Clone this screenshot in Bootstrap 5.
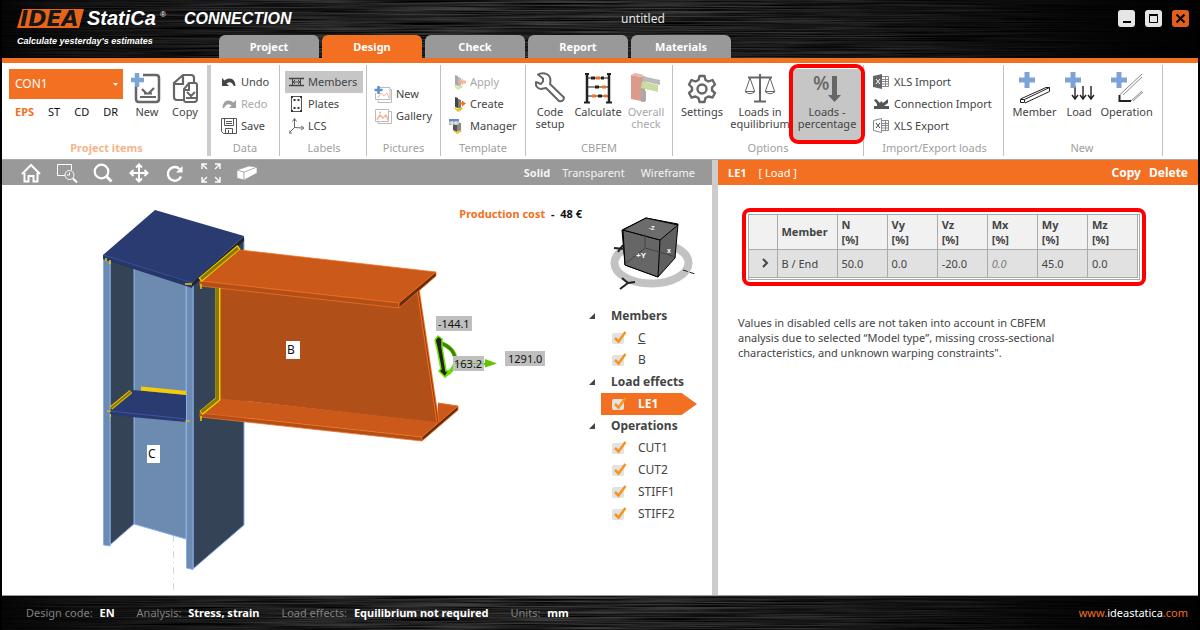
<!DOCTYPE html>
<html lang="en">
<head>
<meta charset="utf-8">
<meta name="viewport" content="width=device-width, initial-scale=1">
<title>IDEA StatiCa Connection - untitled</title>
<link href="https://cdn.jsdelivr.net/npm/bootstrap@5.3.0/dist/css/bootstrap.min.css" rel="stylesheet">
<style>
:root{--brand:#f36f21;--ink:#444;--muted:#a0a0a0;--line:#c0c0c0}
body{font:11px/16px "Noto Sans","Open Sans",sans-serif;color:var(--ink);border:solid #000;border-width:0 2px;background:#fff}
button{font:inherit;color:inherit;background:none;border:0;padding:0}
a{color:inherit;text-decoration:none}
svg{display:block;flex:none}
.brushed{background:
 url("data:image/svg+xml,%3Csvg xmlns='http://www.w3.org/2000/svg' width='1200' height='64'%3E%3Cfilter id='f' x='0' y='0' width='1' height='1'%3E%3CfeTurbulence type='fractalNoise' baseFrequency='.008 .8' numOctaves='3' seed='4'/%3E%3CfeColorMatrix values='0 0 0 0 0 0 0 0 0 0 0 0 0 0 0 1.800 0 0 0 -.450'/%3E%3C/filter%3E%3Crect width='1200' height='64' filter='url(%23f)'/%3E%3C/svg%3E"),
 linear-gradient(90deg,#0a0a0a 0,#262626 12%,#3c3c3c 28%,#404040 50%,#2a2a2a 72%,#080808 92%,#020202 100%)}
.top-bar{height:63px;border-bottom:5px solid var(--brand)}
.logo-col{width:217px;padding:8px 0 0 14px}
.tagline{font:italic bold 9px/12px "Liberation Sans",sans-serif;padding:5px 0 0 1px}
.doc-title{font-size:12px;line-height:20px;color:#e4e4e4;margin-left:402px;padding-top:9px}
.main-tabs{gap:3px}
.main-tabs button{width:100px;height:23px;border-radius:6px 6px 0 0;background:#999;color:#fff;font-weight:700}
.main-tabs .current{background:var(--brand)}
.win-btns{gap:10px;padding:10px 9px 0 0}
.win-btns button{width:17px;height:17px;border-radius:3px;background:#e6e6e6}
.win-btns .close-win{background:#e2601a}
.ribbon{height:97px;padding:2px 0 3px;border-bottom:1px solid #aaa}
.rgroup{border-right:1px solid var(--line);padding:4px 3px 0;flex:none;display:flex;flex-direction:column}
.rgroup>.tools{flex:1}
.rgroup>.stack{padding-top:2px}
.rgroup>.caption{text-align:center;color:var(--muted)}
.g-items{width:209px;border-right:4px solid #ccc;padding-left:7px}
.g-items>.caption{color:#f8b489;font-weight:700}
.g-data{width:69px}.g-labels{width:87px;padding-left:5px}.g-pict{width:74px}.g-tmpl{width:85px}
.g-cbfem{width:147px;padding:4px 0 0}.g-opt{width:191px;padding:4px 0 0}.g-io{width:140px;padding-left:5px}.g-new{width:159px;padding-left:1px}
.sm-btn{display:flex;align-items:center;gap:4px;height:22px;padding-left:7px;width:100%;white-space:nowrap}
.sm-btn.pressed{background:#c6c6c6}
.g-labels .sm-btn,.g-io .sm-btn,.g-tmpl .sm-btn{padding-left:4px}
.g-pict .sm-btn{padding-left:4px}
.lg-btn{display:flex;flex-direction:column;align-items:center;padding-top:3px;line-height:12px;gap:2px;width:48px;height:71px;white-space:nowrap}
.g-opt .lg-btn{width:58px}
.g-opt .lg-btn.pressed{width:68px;background:#c6c6c6}
.g-items .lg-btn{width:38px}
.g-new .w-a{width:62px}.g-new .w-b{width:30px}.g-new .w-c{width:68px}
.off{color:#a8a8a8}.off svg{opacity:.5}
.con-select{width:114px;height:30px;border:0;border-radius:0;color:#fff;padding:0 6px;font-size:12px;appearance:none;background:var(--brand) url("data:image/svg+xml,%3Csvg xmlns='http://www.w3.org/2000/svg' width='5' height='3'%3E%3Cpath d='M0 0h5L2.500 3z' fill='%23fff'/%3E%3C/svg%3E") no-repeat right 5px center}
.types{gap:14px;padding:5px 0 0 6px;color:#111}
.types .on{color:var(--brand);font-weight:700}
.ring{position:relative}
.ring::after{content:"";position:absolute;inset:-5px -4px -4px -4px;border:4px solid red;border-radius:9px;pointer-events:none}
.left-pane{width:716px;border-right:6px solid #ccc}
.view-bar{height:25px;background:#999;color:#f4f4f4;padding:0 17px 0 11px}
.view-bar .icons button{width:36px}
.view-bar .icons svg{margin:auto}
.cost{top:21px;right:0;color:#111;font-weight:700}
.side{width:130px}
.tree-list{margin:0;padding:0 0 0 7px;list-style:none}
.tree-list li{height:22px;display:flex;align-items:center;font-size:12px}
.tree-list .head{font-weight:700}
.tree-list .head svg{margin-right:16px}
.tree-list .leaf{padding-left:23px;gap:11px}
.tree-list .sel{margin-left:12px;padding-left:11px;width:96px;background:var(--brand);color:#fff;font-weight:700;clip-path:polygon(0 0,84% 0,100% 50%,84% 100%,0 100%)}
.tick{appearance:none;width:15px;height:15px;margin:0;background:url("data:image/svg+xml,%3Csvg xmlns='http://www.w3.org/2000/svg' width='15' height='15'%3E%3Crect y='2' width='12' height='11' rx='2' fill='%23e2e2e2'/%3E%3Cpath d='M3 7l3.500 3.500L13.500 1' fill='none' stroke='%23f7941e' stroke-width='2.500'/%3E%3C/svg%3E")}
.prop-bar{height:25px;background:var(--brand);color:#fff;padding:0 10px}
.prop-bar button{font-size:12px}
.table-ring{border:4px solid red;border-radius:8px;padding:2px;margin:23px 0 0 24px;width:404px}
.table-box{border:1px solid #aaa;padding-bottom:1px}
.pct{width:389px;border-collapse:collapse;table-layout:fixed}
.pct th,.pct td{border:solid #aaa;border-width:0 1px 1px 0;padding:0 0 0 4px;line-height:15px}
.pct th{height:34px;background:#f1f1f1}
.pct td{height:28px;background:#e1e1e1}
.pct .c0{width:28px}.pct .c1{width:60px}
.note{width:340px;margin:29px 0 0 20px;line-height:15px}
.status{height:35px;color:#808080;border-top:1px solid #999;padding:0 10px 0 24px;gap:22px}
.status b{color:#fff;margin-left:4px}
.site{color:var(--brand)}
.site span{color:#fff}
</style>
</head>
<body class="min-vh-100 d-flex flex-column">
<header class="top-bar brushed d-flex">
  <div class="logo-col text-white">
    <svg width="280" height="22" viewBox="16 8 280 22" overflow="visible">
      <path d="M22.500 9H84l-5 19H17z" fill="#e8641b"/>
      <text x="20" y="26" font-family="DejaVu Sans" font-weight="bold" font-style="italic" font-size="22" fill="#171717">IDEA</text>
      <text x="87" y="25" font-family="Liberation Sans" font-weight="bold" font-style="italic" font-size="20" fill="#fff">StatiCa</text>
      <text x="160" y="17" font-family="Liberation Sans" font-style="italic" font-size="8" fill="#fff">®</text>
      <text x="184" y="24" font-family="Liberation Sans" font-weight="bold" font-style="italic" font-size="16" fill="#fff">CONNECTION</text>
    </svg>
    <div class="tagline text-nowrap">Calculate yesterday's estimates</div>
  </div>
  <div class="flex-fill d-flex flex-column justify-content-between">
    <div class="doc-title">untitled</div>
    <nav class="main-tabs d-flex">
      <button>Project</button><button class="current">Design</button><button>Check</button><button>Report</button><button>Materials</button>
    </nav>
  </div>
  <div class="win-btns d-flex">
    <button aria-label="Minimize"><svg width="17" height="17"><path d="M5 12h8" stroke="#000" stroke-width="2"/></svg></button>
    <button aria-label="Maximize"><svg width="17" height="17"><path d="M4.500 5.500h8v7h-8zM4 4.500h9" fill="none" stroke="#000"/></svg></button>
    <button class="close-win" aria-label="Close"><svg width="17" height="17"><path d="M4.500 4.500l8 8m0-8l-8 8" stroke="#000" stroke-width="2"/></svg></button>
  </div>
</header>

<section class="ribbon d-flex">
  <div class="rgroup g-items">
    <div class="tools d-flex">
      <div class="flex-fill">
        <select class="con-select" aria-label="Project item"><option>CON1</option></select>
        <div class="types d-flex"><button class="on">EPS</button><button>ST</button><button>CD</button><button>DR</button></div>
      </div>
      <button class="lg-btn">
        <svg width="32" height="32" fill="none" stroke="#666" stroke-width="2.500"><path d="M12 3h13q3 0 3 3v21q0 3-3 3H8q-3 0-3-3V14"/><path d="M9 25h16M11 17l5 5m7-6l-5 5M13 21.500h8" stroke-width="2.200"/><path d="M6 1v14M-1 8h14" stroke="#7da3d6" stroke-width="4.500"/></svg>
        New</button>
      <button class="lg-btn">
        <svg width="32" height="32" fill="none" stroke="#666" stroke-width="2.200"><path d="M14 28H8q-3 0-3-3V11l9-8h8q3 0 3 3v5M14 4v8H6"/><path d="M20 11h6q2 0 2 2v14q0 3-3 3h-8q-2 0-2-2V17zM20 12v6h-4M17 26h10M18 20l4 4 4-4" stroke-width="2"/></svg>
        Copy</button>
    </div>
    <div class="caption">Project items</div>
  </div>
  <div class="rgroup g-data">
    <div class="tools stack">
      <button class="sm-btn"><svg width="16" height="16"><path d="M1 4v8h7L5.500 9.500Q10 6 13 12h1.500Q14 4 8 4.500 5 5 3.500 6.500z" fill="#444"/></svg>Undo</button>
      <button class="sm-btn off"><svg width="16" height="16"><path d="M15 4v8H8l2.500-2.500Q6 6 3 12H1.500Q2 4 8 4.500q3 .5 4.500 2z" fill="#444"/></svg>Redo</button>
      <button class="sm-btn"><svg width="16" height="16" fill="none" stroke="#555"><path d="M.5.5h15v15h-13l-2-2zM3.500.5v7h9v-7M4.500 15.500v-5h7v5M7.500 12v3M5 3.500h6M5 5.500h6" /></svg>Save</button>
    </div>
    <div class="caption">Data</div>
  </div>
  <div class="rgroup g-labels">
    <div class="tools stack">
      <button class="sm-btn pressed"><svg width="15" height="14" fill="none" stroke="#444"><path d="M0 3.500h15M0 10.500h15" stroke-width="1.600"/><path d="M3.500 3v8M11.500 3v8M4 7h7M6 5L4 7l2 2m3-4l2 2-2 2"/></svg>Members</button>
      <button class="sm-btn"><svg width="15" height="16" fill="none" stroke="#555"><path d="M2.500 2v12M12.500 2v12M4 .5h7M4 15.500h7"/><path d="M2 1h2m7 0h2M2 15h2m7 0h2M4.500 4h2m2 0h2m-6 8h2m2 0h2" stroke="#333" stroke-width="2"/></svg>Plates</button>
      <button class="sm-btn"><svg width="15" height="16" fill="none" stroke="#666"><path d="M5.500 10V1M5.500 9.500l8 .500M5.500 9.500L1 14M3.500 3.500l2-3 2 3M12 8l3 2-3 2M0 12v3h3"/></svg>LCS</button>
    </div>
    <div class="caption">Labels</div>
  </div>
  <div class="rgroup g-pict">
    <div class="tools d-flex flex-column justify-content-center">
      <button class="sm-btn"><svg width="18" height="18" fill="none" stroke="#bbb"><path d="M4 2.500h12v12H1.500V8M16 4.500h1.500v13H4v-2"/><path d="M4 13l3-5 3 3 3-3 2 5" stroke="#f6b58f"/><path d="M4.500 1v8M.5 5h8" stroke="#5b8fd0" stroke-width="2.500"/></svg>New</button>
      <button class="sm-btn"><svg width="18" height="18" fill="none" stroke="#bbb"><path d="M1.500 2.500h13v12h-13zM15 4.500h2.500v12H4v-2"/><path d="M3 13l3-5 3 3 3-3 2 5M5 5.500h2" stroke="#f6b58f" stroke-width="1.500"/></svg>Gallery</button>
    </div>
    <div class="caption">Pictures</div>
  </div>
  <div class="rgroup g-tmpl">
    <div class="tools stack">
      <button class="sm-btn off"><svg class="ms-1" width="14" height="16"><path d="M3 1l3 1v10l-3-1z" fill="#555"/><path d="M6 3l3 1v9l-3-1z" fill="#777"/><path d="M1 11l5 5 5-3-2-2-3 2z" fill="#a5c850"/><path d="M7 7.500l4-3v2h3v3h-3v2z" fill="#f36f21"/></svg>Apply</button>
      <button class="sm-btn"><svg class="ms-1" width="14" height="16"><path d="M3 1l3 1v10l-3-1z" fill="#444"/><path d="M6 3l3 1v9l-3-1z" fill="#777"/><path d="M1 11l5 5 5-3-2-2-3 2z" fill="#e8c020"/><path d="M7 6.500h3v-2l4 3-4 3v-2H7z" fill="#f36f21"/></svg>Create</button>
      <button class="sm-btn"><svg width="18" height="16"><path d="M5 4l4 1v9l-4-2z" fill="#555"/><path d="M9 4l4 1v9l-4-1z" fill="#888"/><path d="M4 12l5 4 5-3-2-1-3 2z" fill="#e8c020"/><path d="M1 1h10v6H1z" fill="#aaa"/><path d="M1 1h10v2H1z" fill="#5b8fd0"/><path d="M1 5h10M4 3v4m4-4v4" stroke="#eee"/></svg>Manager</button>
    </div>
    <div class="caption">Template</div>
  </div>
  <div class="rgroup g-cbfem">
    <div class="tools d-flex">
      <button class="lg-btn"><svg width="32" height="32" fill="none" stroke="#666" stroke-width="2"><path d="M4 2.500l5 4v3L7 12l-5-2Q1 16 7 17l5-1 13 13q3 1 4.500-1.500l.5-2L16 12Q18 3 11 1.500 7 .5 4 2.500z" stroke-linejoin="round"/></svg>Code<br>setup</button>
      <button class="lg-btn"><svg width="32" height="32" fill="none" stroke="#222"><path d="M5 1v30M27 1v30" stroke-width="2.500"/><path d="M2 30.500h6m16 0h6M3 2h4m18 0h4" stroke-width="2"/><path d="M4 6h24M4 15h24M4 24h24" stroke-width="1.200"/><path d="M9 6h4m6 0h3M13 15h4m-1 9h4" stroke-width="3"/><path d="M14 6h4m2 9h4M10 24h4m8 0h3" stroke="#f36f21" stroke-width="3"/></svg>Calculate</button>
      <button class="lg-btn off"><svg width="32" height="32"><path d="M1 3l10 2v24L1 27z" fill="#b8391a"/><path d="M1 3l4-2 9 2-3 2z" fill="#d9694b"/><path d="M11 5l4-1v26l-4-1z" fill="#8a3a24"/><path d="M12 4l18 4v5l-17-4z" fill="#777"/><path d="M12 9l16 4v7l-17-4z" fill="#93b846"/><path d="M11 17l5 2v10l-5 1z" fill="#555"/></svg>Overall<br>check</button>
    </div>
    <div class="caption">CBFEM</div>
  </div>
  <div class="rgroup g-opt">
    <div class="tools d-flex">
      <button class="lg-btn"><svg width="32" height="32" fill="none" stroke="#666" stroke-width="2.400" stroke-linejoin="round"><path d="M13.500 4h5l1 4 3 1.500 4-1.500 2.500 4.500-3 3v3l3 2.500-2.500 4.500-4-1-3 1.500-1 4h-5l-1-4-3-1.500-4 1L3 21l3-2.500v-3l-3-3L5.500 8l4 1.500 3-1.500z"/><circle cx="16" cy="17" r="4.500"/></svg>Settings</button>
      <button class="lg-btn"><svg width="32" height="32" fill="none" stroke="#666" stroke-width="1.500"><path d="M16 2v27M4 5.500h24M10 29.500h12" stroke-width="2"/><path d="M6 6L1.500 19M6 6l4.500 13M1 19.500h10q-5 4.500-10 0zM26 6l-4.500 13M26 6l4.500 13M21 19.500h10q-5 4.500-10 0z" stroke-width="1"/></svg>Loads in<br>equilibrium</button>
      <span class="ring ms-1"><button class="lg-btn pressed"><svg width="32" height="32" overflow="visible"><text x="2" y="18" font-family="Open Sans" font-size="19" font-weight="600" fill="#666">%</text><path d="M21 4h5v19h4l-6.500 7L17 23h4z" fill="#666"/></svg>Loads -<br>percentage</button></span>
    </div>
    <div class="caption">Options</div>
  </div>
  <div class="rgroup g-io">
    <div class="tools stack">
      <button class="sm-btn"><svg width="17" height="16"><path d="M0 2l9-2v15L0 13z" fill="#666"/><path d="M3 5l4 5m0-5l-4 5" stroke="#fff"/><path d="M9 2.500h6.500v10H9M9 5.500h6M9 7.500h6M9 10h6M12.500 2v11" fill="none" stroke="#888"/></svg>XLS Import</button>
      <button class="sm-btn"><svg width="17" height="12" fill="#555"><path d="M1 8h15v3H1zM1 2l2-1 4 4 1-2 2 2 5-4v4l-4 3H4V6z"/></svg>Connection Import</button>
      <button class="sm-btn"><svg width="17" height="16" fill="none" stroke="#888"><path d="M.5 2.500l8-2v14l-8-2z"/><path d="M3 5l4 5m0-5l-4 5" stroke="#444"/><path d="M9 2.500h6.500v10H9M9 5.500h6M9 7.500h6M9 10h6M12.500 2v11"/></svg>XLS Export</button>
    </div>
    <div class="caption">Import/Export loads</div>
  </div>
  <div class="rgroup g-new">
    <div class="tools d-flex">
      <button class="lg-btn w-a"><svg width="32" height="32" fill="none" stroke="#222"><path d="M1.500 27.500h4v3h-4zM1.500 27L27 15.500h3.500v4L6 31M5.500 27.500l25-12"/><path d="M8 0v16M0 8h16" stroke="#7da3d6" stroke-width="5"/></svg>Member</button>
      <button class="lg-btn w-b"><svg width="32" height="32" fill="none" stroke="#222" stroke-width="1.400"><path d="M12 14v12m-3-3l3 4 3-4M20 14v12m-3-3l3 4 3-4M28 14v12m-3-3l3 4 3-4"/><path d="M10 0v16M2 8h16" stroke="#7da3d6" stroke-width="5"/></svg>Load</button>
      <button class="lg-btn w-c"><svg width="32" height="32" fill="none" stroke="#888"><path d="M8.500 23L31 2M31 5L12 23M20 29l11-10M22 29l10-9"/><path d="M8.500 23v6H20" stroke="#222" stroke-width="2"/><path d="M8 0v16M0 8h16" stroke="#7da3d6" stroke-width="5"/></svg>Operation</button>
    </div>
    <div class="caption">New</div>
  </div>
</section>

<main class="flex-fill d-flex">
  <section class="left-pane d-flex flex-column flex-shrink-0">
    <div class="view-bar d-flex align-items-center justify-content-between">
      <div class="icons d-flex">
        <button aria-label="Home"><svg width="20" height="20" fill="none" stroke="#fff" stroke-width="2"><path d="M1 11l9-9 9 9M3.500 10v8.500h4V13h5v5.500h4V10"/></svg></button>
        <button aria-label="Zoom window"><svg width="22" height="20" fill="none" stroke="#fff"><path d="M9 12.500H1.500V1.500h14V7"/><circle cx="13.500" cy="12" r="4.500"/><path d="M17 15.500l4 4" stroke-width="2"/><path d="M13.500 9.500V12H11"/></svg></button>
        <button aria-label="Zoom"><svg width="20" height="20" fill="none" stroke="#fff"><circle cx="8.500" cy="8.500" r="6.800" stroke-width="2.200"/><path d="M13.500 13.500l5 5" stroke-width="3"/></svg></button>
        <button aria-label="Pan"><svg width="20" height="20" fill="none" stroke="#fff" stroke-width="2"><path d="M10 2v16M2 10h16M7 4.500l3-3 3 3M7 15.500l3 3 3-3M4.500 7l-3 3 3 3M15.500 7l3 3-3 3"/></svg></button>
        <button aria-label="Rotate"><svg width="20" height="20"><path d="M16 13.500A6.800 6.800 0 1 1 14.500 6" fill="none" stroke="#fff" stroke-width="2.400"/><path d="M17.500 3v6.500H11z" fill="#fff"/></svg></button>
        <button aria-label="Fit all"><svg width="20" height="20" fill="none" stroke="#fff" stroke-width="1.400"><path d="M1 6V1h5M1 1l5 5M14 1h5v5M19 1l-5 5M1 14v5h5M1 19l5-5M19 14v5h-5M19 19l-5-5"/></svg></button>
        <button aria-label="Clipping"><svg width="20" height="18" stroke="#999" stroke-width=".6"><path d="M0 6l7 2v8l-7-2z" fill="#fff"/><path d="M7 8l13-5v6L7 16z" fill="#fff"/><path d="M0 6l12-4 8 1L7 8z" fill="#fff"/></svg></button>
      </div>
      <div class="d-flex"><button class="fw-bold">Solid</button><button class="ms-2 me-3 ps-1">Transparent</button><button>Wireframe</button></div>
    </div>
    <div class="flex-fill d-flex">
      <div class="flex-fill position-relative">
        <div class="cost position-absolute"><span class="site">Production cost</span>&nbsp; -&nbsp; 48 €</div>
        <svg width="100%" height="409" viewBox="2 185 580 409" preserveAspectRatio="xMinYMin meet">
          <path d="M173.500 535v60" stroke="#c5d8f0" stroke-dasharray="7 4 1 4"/>
          <!-- column -->
          <g stroke="#87aee6">
            <path d="M134 260v264l52 15V275z" fill="#6d8bb0"/>
            <path d="M110 258v287l24-21V262z" fill="#354356"/>
            <path d="M103.500 258v287l6.500 1V260z" fill="#6d8bb0"/>
            <path d="M193 280v289l51-44V238z" fill="#354356"/>
          </g>
          <!-- lower stiffener -->
          <path d="M110 410l23-20 53 5v27l-76-7z" fill="#293b70"/>
          <path d="M110 411l76 8" stroke="#3b55a0"/>
          <path d="M141 388.500l46 4.500" stroke="#f5cc00" stroke-width="4"/>
          <path d="M111 408l20-16.500" stroke="#e8c400" stroke-width="4"/><path d="M111 408l20-16.500" stroke="#8a7800" stroke-width="2"/>
          <path d="M186.500 284v284l6.500 1.500V284z" fill="#6d8bb0" stroke="#87aee6"/>
          <path d="M107 411h4M185 421h5M110.500 414v3" stroke="#f5cc00"/>
          <!-- cap plate -->
          <path d="M103 255l89 28 52-47v5l-52 46-89-28z" fill="#22252f"/>
          <path d="M103 255l89 29v4l-89-29z" fill="#263769"/>
          <path d="M155 210l89 26-52 47-89-28z" fill="#293b70"/>
          <path d="M103 255l89 28" stroke="#34509e"/>
          <!-- beam -->
          <path d="M220 286v112l218 25-20-134z" fill="#b04f18"/>
          <path d="M200 413l20-15 217 24 1-19 20 3-36 31z" fill="#cb5a1a"/>
          <path d="M438 423l-20-134" stroke="#f36f21" stroke-width="3"/><path d="M438 423l-20-134" stroke="#8f3c0d"/>
          <path d="M200 413l222 24v4L200 417z" fill="#b04f18" stroke="#f36f21" stroke-width=".8"/>
          <path d="M458 406l-36 31v4l36-31z" fill="#6a2b08" stroke="#f36f21" stroke-width=".8"/>
          <path d="M438 403l20 3" stroke="#f36f21"/>
          <path d="M240 250l196 22-37 31-199-22z" fill="#cb5a1a" stroke="#f36f21" stroke-width=".8"/>
          <path d="M200 281l199 22v5L200 286z" fill="#b04f18" stroke="#f36f21" stroke-width=".8"/>
          <path d="M436 272l-37 31v5l37-32z" fill="#6a2b08" stroke="#f36f21" stroke-width=".8"/>
          <!-- welds -->
          <g fill="none"><path d="M200 280l39-33M218 288v111l-17 14" stroke="#f0cc00" stroke-width="5"/><path d="M201 279l37-31M217.500 288v111l-16 13" stroke="#8a7800" stroke-width="3"/><path d="M201 284v5M201 416v5M106 258v3M110 260v4M185 284h7" stroke="#f0cc00" stroke-width="1.500"/></g>
          <!-- load glyphs -->
          <path d="M440 343q14 4 16 17-1 10-12 16" fill="none" stroke="#66dd00" stroke-width="4"/>
          <path d="M441 343q13 5 14 16" fill="none" stroke="#3c8500" stroke-width="3"/>
          <path d="M435 340l3-4 4 3v8l4 24h3l-4 6-6-6 2-2-4-21z" fill="#222" stroke="#6fe000" stroke-width="1.500"/>
          <path d="M455 363h30v-4l12 4.500-12 4V365h-30z" fill="#62c400"/>
          <g fill="#bfbfbf"><path d="M436 316h36v15h-36zM453 356h31v15h-31zM505 351h40v15h-40z"/><path d="M286 341h14v18h-14zM147 445h13v18h-13z" fill="#fff"/></g>
          <path d="M455 363.500h28" stroke="#7dbb40"/>
          <g font-family="Noto Sans" font-size="11" fill="#111"><text x="438" y="328">-144.1</text><text x="454" y="368">163.2</text><text x="508" y="363">1291.0</text>
          <text x="287" y="354" font-size="12">B</text><text x="148" y="458" font-size="12">C</text></g>
        </svg>
      </div>
      <div class="side">
        <svg width="130" height="120" viewBox="582 185 130 120">
          <ellipse cx="651.500" cy="263" rx="37" ry="20.500" fill="none" stroke="#c2c2c2" stroke-width="8"/>
          <path d="M646 218l32 6-3 34-17 19-33-12-3-35z" fill="#5f5f5f" stroke="#000"/>
          <path d="M623 230l37 10-2 37-33-12z" fill="#666" stroke="#000"/><path d="M646 218l32 7-18 15-37-10z" fill="#6c6c6c" stroke="#000"/>
          <path d="M625 264l20-16 31 9M645 248v-14" fill="none" stroke="#444"/>
          <g fill="#fff" font-family="Liberation Sans" font-weight="bold"><text x="636" y="258" font-size="8">+Y</text><text x="649" y="230" font-size="6">-Z</text><text x="667" y="253" font-size="7">x</text></g>
          <path d="M622 278l6 5m7-1l-7 1-8 6M614 248l11 1m-7 3l5-7" stroke="#222" fill="none" stroke-width="2"/>
          <path d="M683 270l12 4" stroke="#222" stroke-dasharray="5 2"/>
        </svg>
        <ul class="tree-list">
          <li class="head"><svg width="6" height="6"><path d="M0 6L6 0v6z" fill="#444"/></svg><span>Members</span></li>
          <li class="leaf"><input class="tick" type="checkbox" id="m1" checked><label for="m1"><u>C</u></label></li>
          <li class="leaf"><input class="tick" type="checkbox" id="m2" checked><label for="m2">B</label></li>
          <li class="head"><svg width="6" height="6"><path d="M0 6L6 0v6z" fill="#444"/></svg><span>Load effects</span></li>
          <li class="leaf sel"><input class="tick" type="checkbox" id="l1" checked><label for="l1">LE1</label></li>
          <li class="head"><svg width="6" height="6"><path d="M0 6L6 0v6z" fill="#444"/></svg><span>Operations</span></li>
          <li class="leaf"><input class="tick" type="checkbox" id="o1" checked><label for="o1">CUT1</label></li>
          <li class="leaf"><input class="tick" type="checkbox" id="o2" checked><label for="o2">CUT2</label></li>
          <li class="leaf"><input class="tick" type="checkbox" id="o3" checked><label for="o3">STIFF1</label></li>
          <li class="leaf"><input class="tick" type="checkbox" id="o4" checked><label for="o4">STIFF2</label></li>
        </ul>
      </div>
    </div>
  </section>
  <section class="flex-fill">
    <div class="prop-bar d-flex align-items-center">
      <b>LE1</b><span class="ms-2 ps-1 me-auto">[ Load ]</span>
      <button class="fw-bold me-2">Copy</button><button class="fw-bold">Delete</button>
    </div>
    <div class="table-ring"><div class="table-box">
      <table class="pct">
        <thead><tr><th class="c0"></th><th class="c1">Member</th><th>N<br>[%]</th><th>Vy<br>[%]</th><th>Vz<br>[%]</th><th>Mx<br>[%]</th><th>My<br>[%]</th><th>Mz<br>[%]</th></tr></thead>
        <tbody><tr><td><svg class="ms-1 ps-1" width="14" height="10"><path d="M2 1l4 4-4 4" fill="none" stroke="#444" stroke-width="2"/></svg></td><td>B / End</td><td>50.0</td><td>0.0</td><td>-20.0</td><td class="fst-italic text-black-50">0.0</td><td>45.0</td><td>0.0</td></tr></tbody>
      </table>
    </div></div>
    <p class="note">Values in disabled cells are not taken into account in CBFEM analysis due to selected “Model type”, missing cross-sectional characteristics, and unknown warping constraints".</p>
  </section>
</main>

<footer class="status brushed d-flex align-items-center">
  <span>Design code: <b>EN</b></span><span>Analysis: <b>Stress, strain</b></span><span>Load effects: <b>Equilibrium not required</b></span><span>Units: <b>mm</b></span>
  <a class="site ms-auto" href="#">www.<span>ideastatica</span>.com</a>
</footer>
<script src="https://cdn.jsdelivr.net/npm/bootstrap@5.3.0/dist/js/bootstrap.bundle.min.js"></script>
</body>
</html>
